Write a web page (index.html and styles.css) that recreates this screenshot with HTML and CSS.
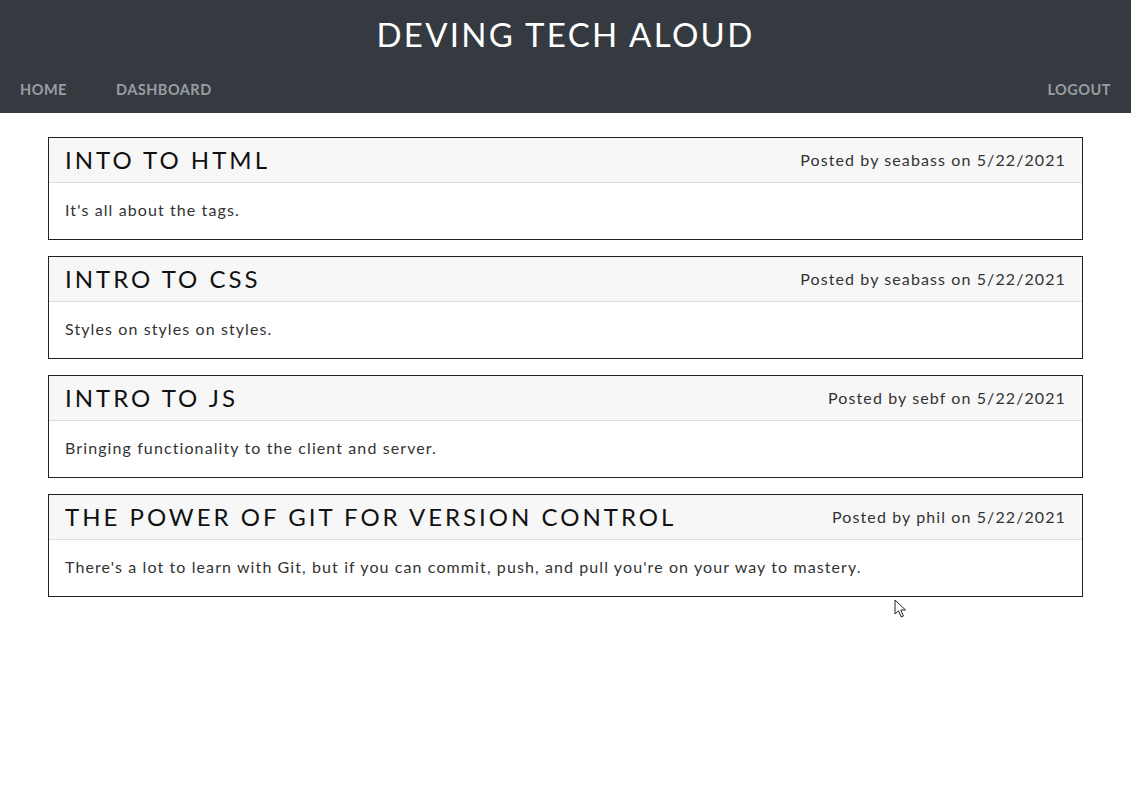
FILE: index.html
```html
<!DOCTYPE html>
<html lang="en">
<head>
<meta charset="utf-8">
<title>Deving Tech Aloud</title>
<link rel="stylesheet" href="styles.css">
</head>
<body>
<header class="site-header">
  <h1 class="site-title">DEVING TECH ALOUD</h1>
  <nav class="site-nav">
    <div class="nav-left">
      <a class="nav-link" href="#">HOME</a>
      <a class="nav-link" href="#">DASHBOARD</a>
    </div>
    <a class="nav-link" href="#">LOGOUT</a>
  </nav>
</header>
<main class="posts">
  <article class="post">
    <div class="post-head">
      <h2 class="post-title">INTO TO HTML</h2>
      <span class="post-meta">Posted by seabass on 5/22/2021</span>
    </div>
    <div class="post-body">It's all about the tags.</div>
  </article>
  <article class="post">
    <div class="post-head">
      <h2 class="post-title">INTRO TO CSS</h2>
      <span class="post-meta">Posted by seabass on 5/22/2021</span>
    </div>
    <div class="post-body">Styles on styles on styles.</div>
  </article>
  <article class="post">
    <div class="post-head">
      <h2 class="post-title">INTRO TO JS</h2>
      <span class="post-meta">Posted by sebf on 5/22/2021</span>
    </div>
    <div class="post-body">Bringing functionality to the client and server.</div>
  </article>
  <article class="post">
    <div class="post-head">
      <h2 class="post-title">THE POWER OF GIT FOR VERSION CONTROL</h2>
      <span class="post-meta">Posted by phil on 5/22/2021</span>
    </div>
    <div class="post-body">There's a lot to learn with Git, but if you can commit, push, and pull you're on your way to mastery.</div>
  </article>
</main>
<svg class="cursor" width="14" height="20" viewBox="0 0 14 20" aria-hidden="true">
  <path d="M1 1 L1 15 L4.5 11.8 L7.2 18 L9.4 17 L6.8 11 L11.5 11 Z" fill="#fff" stroke="#222" stroke-width="1" stroke-linejoin="miter"/>
</svg>
</body>
</html>
```

FILE: styles.css
```css
* { box-sizing: border-box; }
html, body { margin: 0; padding: 0; }
body {
  font-family: Lato, "Noto Sans", sans-serif;
  color: #212529;
  background: #fff;
  position: relative;
  min-height: 785px;
}
.site-header {
  background: #343a40;
  height: 113px;
  display: flex;
  flex-direction: column;
}
.site-title {
  margin: 0;
  padding-top: 14px;
  height: 67px;
  text-align: center;
  color: #fff;
  font-weight: 400;
  font-size: 33px;
  letter-spacing: 2.3px;
  line-height: 40px;
}
.site-nav {
  display: flex;
  justify-content: space-between;
  align-items: center;
  padding: 0 20px 2px;
  height: 46px;
}
.nav-left { display: flex; gap: 49px; }
.nav-link {
  color: #9a9da1;
  text-decoration: none;
  font-weight: 700;
  font-size: 14.5px;
  letter-spacing: 0.5px;
}
.posts {
  padding: 24px 48px;
  display: flex;
  flex-direction: column;
  gap: 16px;
}
.post {
  border: 1px solid #222;
}
.post-head {
  background: #f7f7f7;
  border-bottom: 1px solid #dcdcdc;
  height: 45px;
  padding: 0 16px 2px;
  display: flex;
  justify-content: space-between;
  align-items: center;
}
.post-title {
  margin: 0;
  font-weight: 400;
  font-size: 24px;
  letter-spacing: 3px;
  color: #111;
}
.post-meta {
  font-size: 16px;
  letter-spacing: 1.1px;
  color: #333;
}
.post-body {
  height: 56px;
  padding: 0 16px 3px;
  display: flex;
  align-items: center;
  font-size: 16px;
  letter-spacing: 1.1px;
  color: #333;
}
.cursor {
  position: absolute;
  left: 894px;
  top: 599px;
}
```
